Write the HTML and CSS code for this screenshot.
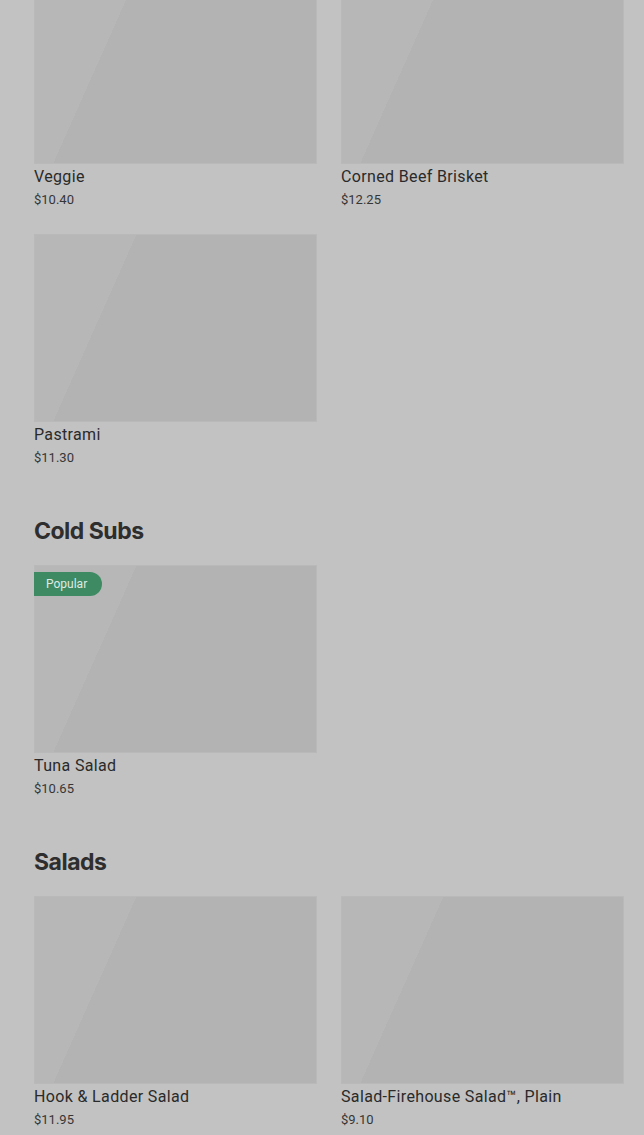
FILE: index.html
```html
<!DOCTYPE html>
<html>
<head>
<meta charset="utf-8">
<link rel="stylesheet" href="styles.css">
</head>
<body>
<main class="menu">
  <section class="section section-first">
    <div class="grid">
      <div class="card">
        <div class="thumb"></div>
        <div class="name">Veggie</div>
        <div class="price">$10.40</div>
      </div>
      <div class="card">
        <div class="thumb"></div>
        <div class="name">Corned Beef Brisket</div>
        <div class="price">$12.25</div>
      </div>
      <div class="card">
        <div class="thumb"></div>
        <div class="name">Pastrami</div>
        <div class="price">$11.30</div>
      </div>
    </div>
  </section>
  <section class="section">
    <h2 class="heading">Cold Subs</h2>
    <div class="grid">
      <div class="card">
        <div class="thumb"><span class="badge">Popular</span></div>
        <div class="name">Tuna Salad</div>
        <div class="price">$10.65</div>
      </div>
    </div>
  </section>
  <section class="section">
    <h2 class="heading">Salads</h2>
    <div class="grid">
      <div class="card">
        <div class="thumb"></div>
        <div class="name">Hook &amp; Ladder Salad</div>
        <div class="price">$11.95</div>
      </div>
      <div class="card">
        <div class="thumb"></div>
        <div class="name">Salad-Firehouse Salad™, Plain</div>
        <div class="price">$9.10</div>
      </div>
    </div>
  </section>
</main>
</body>
</html>
```
FILE: styles.css
```css
html, body {
  margin: 0;
  padding: 0;
  background: #c2c2c2;
  overflow: hidden;
}
body {
  font-family: Roboto, "Liberation Sans", sans-serif;
  color: #2f2f2f;
}
.menu {
  padding: 0 20px 0 34px;
  margin-top: -24px;
}
.section {
  margin-top: 47px;
}
.section-first {
  margin-top: 0;
}
.heading {
  margin: 0 0 18px;
  font-family: Inter, "Noto Sans", sans-serif;
  font-weight: 700;
  font-size: 23px;
  line-height: 32px;
  letter-spacing: -0.5px;
  color: #2e2e2e;
}
.grid {
  display: grid;
  grid-template-columns: 283px 283px;
  column-gap: 24px;
  row-gap: 24px;
}
.thumb {
  position: relative;
  height: 188px;
  background: linear-gradient(114deg, #b7b7b7 0%, #b7b7b7 28%, #b3b3b3 28%, #b3b3b3 100%);
  box-shadow: inset 0 0 0 1px #b9b9b9;
}
.badge {
  position: absolute;
  left: 0;
  top: 7px;
  height: 24px;
  padding: 0 12px;
  width: 44px;
  box-sizing: content-box;
  background: #3e8a63;
  color: #dfeae4;
  font-size: 12px;
  line-height: 24px;
  border-radius: 0 12px 12px 0;
}
.name {
  margin-top: 2px;
  font-size: 16px;
  line-height: 22px;
  font-weight: 400;
  letter-spacing: 0.35px;
  color: #2a2a2a;
}
.price {
  margin-top: 2px;
  font-size: 13px;
  line-height: 20px;
  color: #363636;
}
```
